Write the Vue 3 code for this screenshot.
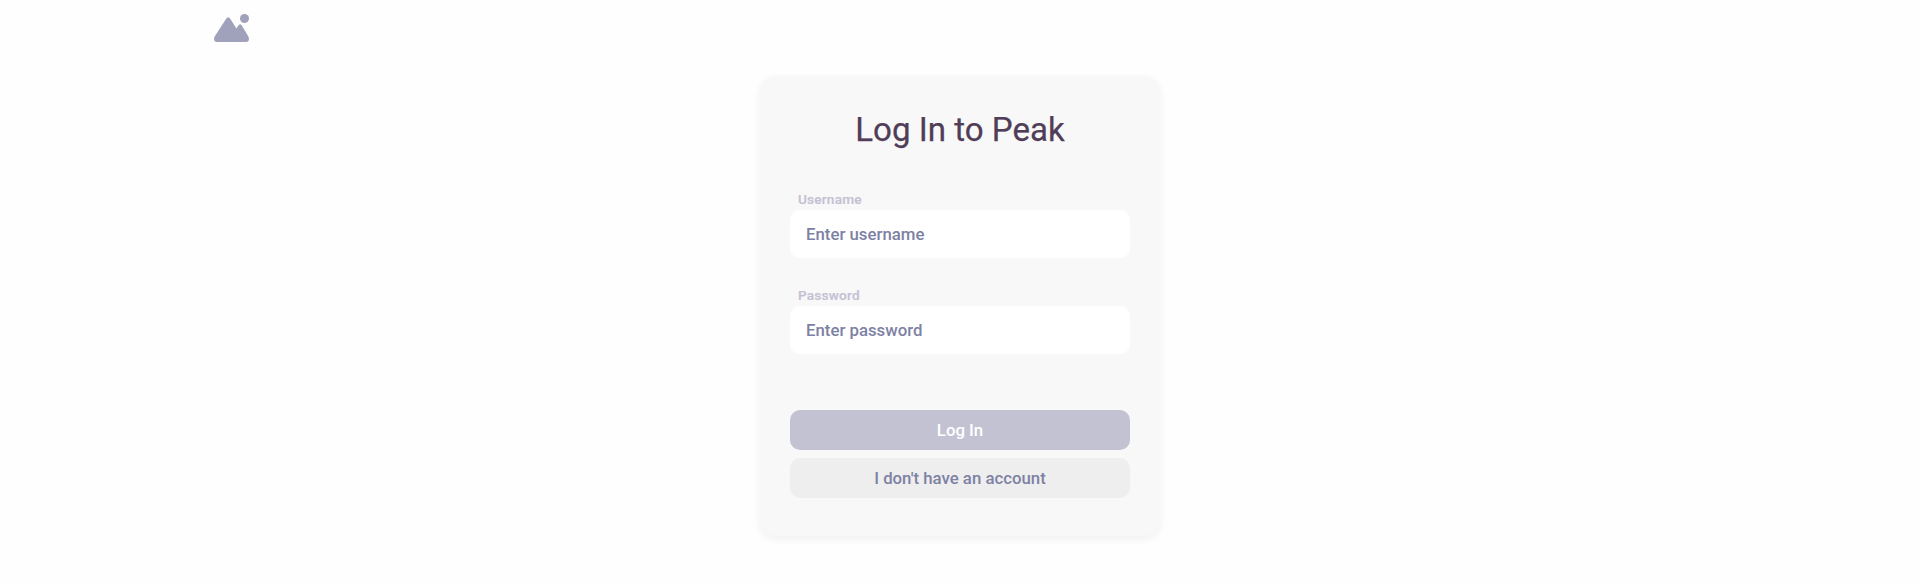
<script setup>
import { ref } from 'vue'

const fields = ref([
  { id: 'username', label: 'Username', type: 'text', placeholder: 'Enter username', value: '' },
  { id: 'password', label: 'Password', type: 'password', placeholder: 'Enter password', value: '' },
])
</script>

<template>
  <div class="page">
    <header class="header">
      <a class="logo" aria-label="Peak">
        <svg width="35" height="28" viewBox="0 0 35 28" fill="currentColor">
          <circle cx="30.5" cy="4.5" r="4.5" />
          <path d="M12 4.9Q14.2 1.7 16.4 4.9L22.4 14.4L24.7 11.1Q26.1 9.2 27.5 11.1L34.5 22.8Q36.2 28 31.5 28H3.5Q-1.2 28 .5 22.8Z" />
        </svg>
      </a>
    </header>
    <main class="main">
      <form class="card" @submit.prevent>
        <h1 class="title">Log In to Peak</h1>
        <div v-for="f in fields" :key="f.id" class="field">
          <label class="label" :for="f.id">{{ f.label }}</label>
          <input :id="f.id" v-model="f.value" class="input" :type="f.type" :placeholder="f.placeholder" />
        </div>
        <div class="actions">
          <button class="button primary" type="submit">Log In</button>
          <button class="button secondary" type="button">I don't have an account</button>
        </div>
      </form>
    </main>
  </div>
</template>

<style>
body {
  background: #fefefe;
}
</style>

<style scoped>
.page,
.page * {
  box-sizing: border-box;
}
.page {
  font-family: Roboto, sans-serif;
  min-height: 584px;
}
.header {
  width: 1520px;
  height: 56px;
  margin: 0 auto;
  padding: 0 14px;
  display: flex;
  align-items: center;
}
.logo {
  display: flex;
  color: #a0a1ba;
}
.main {
  display: flex;
  justify-content: center;
  padding-top: 20px;
}
.card {
  width: 400px;
  height: 460px;
  padding: 30px;
  border-radius: 16px;
  background: #f8f8f8;
  box-shadow: 0 3px 8px rgba(0, 0, 0, 0.06);
}
.title {
  margin: 0 0 34px;
  font-size: 33.1px;
  font-weight: 400;
  line-height: 48px;
  text-align: center;
  color: #503d58;
  -webkit-text-stroke: 0.25px #503d58;
}
.field {
  height: 96px;
}
.label {
  display: block;
  height: 22px;
  padding-left: 8px;
  font-size: 13.6px;
  font-weight: 500;
  letter-spacing: 0.22px;
  line-height: 22px;
  color: #c4c1d4;
  -webkit-text-stroke: 0.2px #c4c1d4;
}
.input {
  display: block;
  width: 100%;
  height: 48px;
  padding: 0 16px;
  border: none;
  border-radius: 10px;
  outline: none;
  background: #fff;
  font: 500 16.8px Roboto, sans-serif;
  color: #7d81a4;
}
.input::placeholder {
  color: #7d81a4;
  opacity: 1;
}
.actions {
  display: flex;
  flex-direction: column;
  gap: 8px;
  padding-top: 30px;
}
.button {
  height: 40px;
  padding: 0;
  border: none;
  border-radius: 10px;
  font: 500 16.8px Roboto, sans-serif;
}
.primary {
  background: #c3c2d3;
  color: #fff;
}
.secondary {
  background: #eee;
  color: #7d81a4;
}
</style>
